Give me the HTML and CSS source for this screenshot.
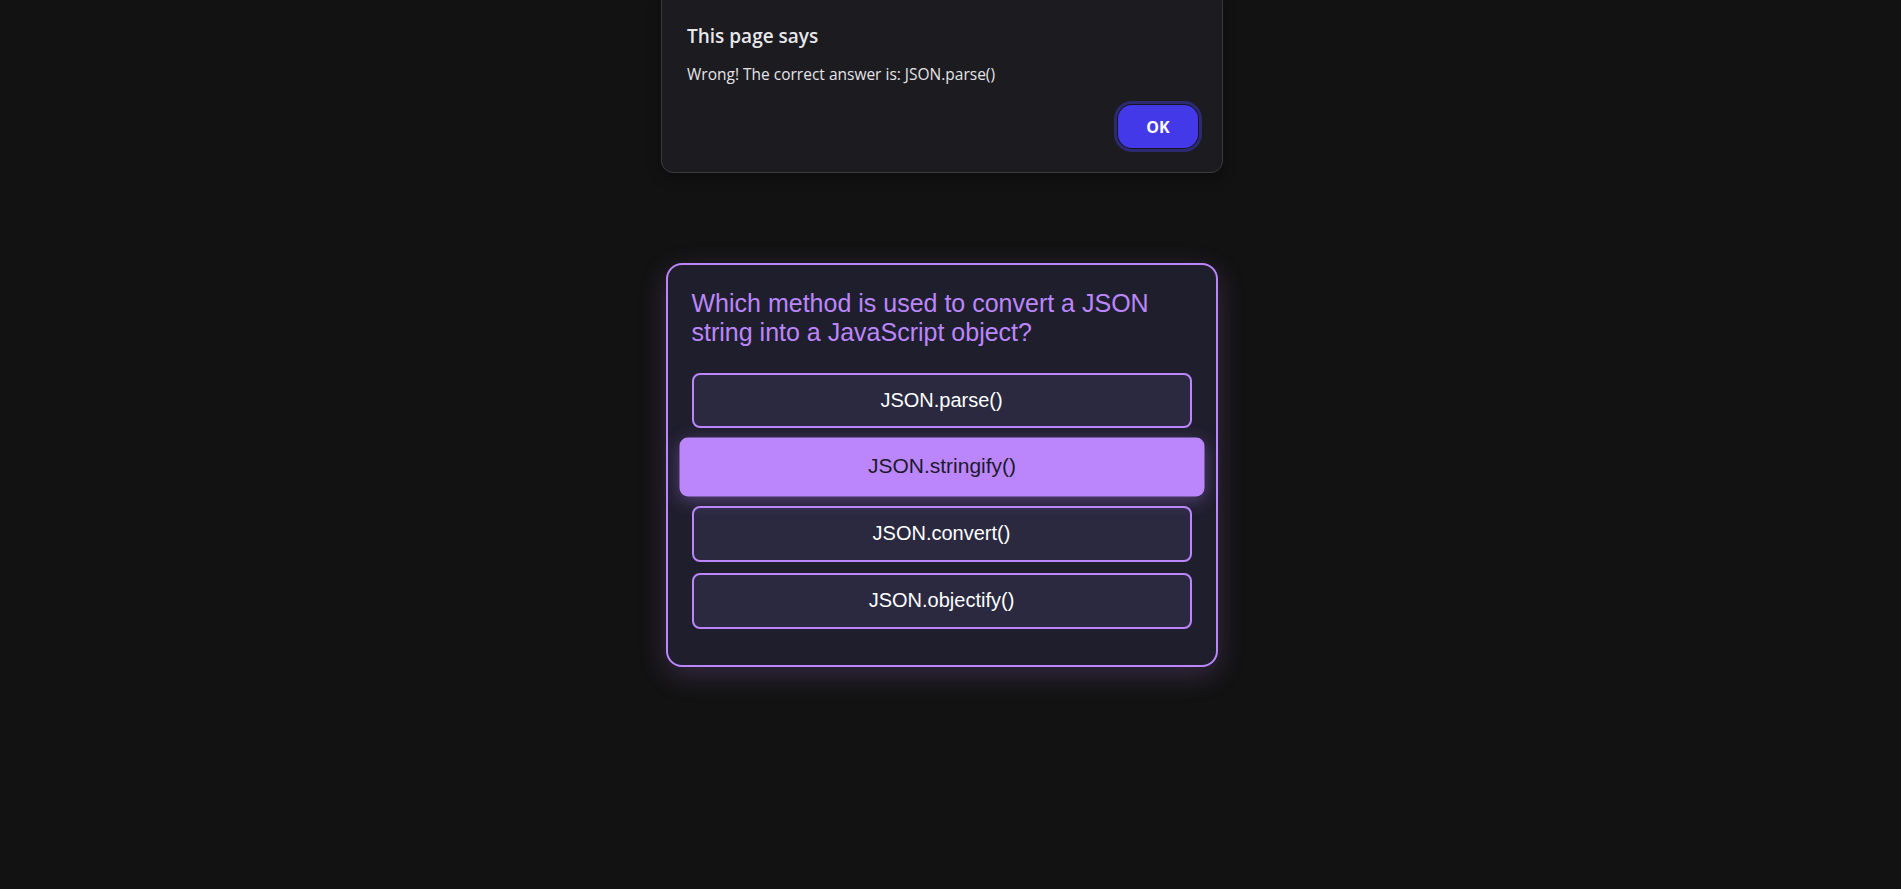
FILE: index.html
```html
<!DOCTYPE html>
<html lang="en">
<head>
<meta charset="utf-8">
<title>Quiz</title>
<link rel="stylesheet" href="styles.css">
</head>
<body>
  <main class="page">
    <section class="quiz-card">
      <h2 class="question">Which method is used to convert a JSON string into a JavaScript object?</h2>
      <div class="options">
        <button class="option">JSON.parse()</button>
        <button class="option option--hover">JSON.stringify()</button>
        <button class="option">JSON.convert()</button>
        <button class="option">JSON.objectify()</button>
      </div>
    </section>
  </main>

  <div class="alert" role="alertdialog">
    <div class="alert-title">This page says</div>
    <div class="alert-message">Wrong! The correct answer is: JSON.parse()</div>
    <div class="alert-actions">
      <button class="alert-ok">OK</button>
    </div>
  </div>
</body>
</html>
```

FILE: styles.css
```css
* {
  box-sizing: border-box;
}

html, body {
  margin: 0;
  padding: 0;
  background: #121212;
  height: 100%;
}

body {
  font-family: "Liberation Sans", Arial, sans-serif;
  overflow: hidden;
}

.page {
  display: flex;
  justify-content: center;
  align-items: flex-start;
  padding-top: 263px;
  padding-right: 18px;
}

.quiz-card {
  width: 552px;
  padding: 24px;
  border: 2px solid #bb86fc;
  border-radius: 16px;
  background: #1f1e2d;
  box-shadow: 0 8px 28px rgba(187, 134, 252, 0.22);
}

.question {
  margin: 0 0 25.5px;
  font-size: 25px;
  line-height: 29px;
  font-weight: normal;
  color: #bb86fc;
}

.options {
  display: flex;
  flex-direction: column;
  gap: 11px;
  padding-bottom: 12px;
}

.option {
  display: block;
  width: 100%;
  padding: 14.4px 16px;
  border: 2px solid #bb86fc;
  border-radius: 8px;
  background: #2a2940;
  color: #ffffff;
  font-family: "Liberation Sans", Arial, sans-serif;
  font-size: 20px;
  line-height: 23px;
  text-align: center;
  cursor: pointer;
}

.option--hover {
  background: #bb86fc;
  color: #1c1a2a;
  transform: scale(1.05);
  box-shadow: 0 4px 16px rgba(187, 134, 252, 0.35);
}

.alert {
  position: absolute;
  top: -10px;
  left: 661px;
  width: 562px;
  padding: 33px 24px 24px 25px;
  background: #1c1b20;
  border: 1px solid #3a393e;
  border-radius: 12px;
  box-shadow: 0 4px 14px rgba(0, 0, 0, 0.35);
  font-family: "Open Sans", "Noto Sans", sans-serif;
}

.alert-title {
  font-size: 19px;
  line-height: 24px;
  font-weight: 600;
  color: #e8e8ec;
}

.alert-message {
  margin-top: 16px;
  font-size: 15.5px;
  line-height: 21px;
  color: #e4e4e8;
}

.alert-actions {
  display: flex;
  justify-content: flex-end;
  margin-top: 20px;
}

.alert-ok {
  width: 80px;
  height: 43px;
  border: none;
  border-radius: 14px;
  background: #4339e8;
  color: #ffffff;
  font-family: "Open Sans", "Noto Sans", sans-serif;
  font-size: 16px;
  font-weight: 700;
  box-shadow: 0 0 0 1px #17161d, 0 0 0 4px #2c2a70;
}
```
